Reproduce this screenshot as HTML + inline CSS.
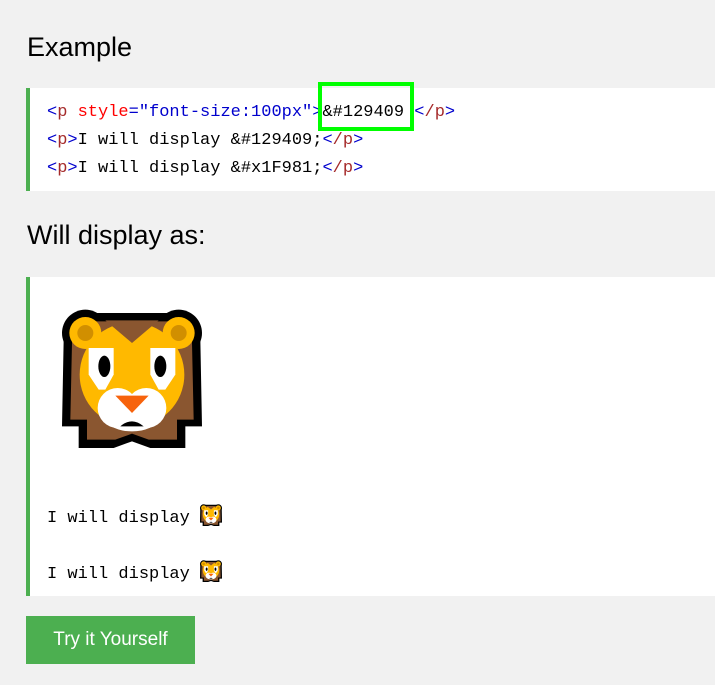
<!DOCTYPE html>
<html><head><meta charset="utf-8"><style>
body{margin:0;width:715px;height:685px;background:#f1f1f1;position:relative;overflow:hidden;font-family:"Liberation Sans",sans-serif}
h2{position:absolute;left:27px;margin:0;font-weight:normal;font-size:27px;color:#000}
.box{position:absolute;left:26px;right:0;background:#fff;border-left:4px solid #4CAF50}
.code{font-family:"Liberation Mono",monospace;font-size:17px;color:#000}
.ln{position:absolute;left:17px;white-space:pre;line-height:28px}
.t{color:#0000cd}.n{color:#a52a2a}.a{color:#f00}.v{color:#0000cd}
.hl{position:absolute;left:318px;top:82px;width:88px;height:41px;border:4px solid #0f0}
.btn{position:absolute;left:26px;top:616px;width:169px;height:48px;background:#4CAF50;color:#fff;font-size:19px;line-height:48px;text-align:center}
svg.s{vertical-align:-4px}
</style></head><body>
<svg width="0" height="0" style="position:absolute"><defs><symbol id="lion" viewBox="95 55 420 420">
<circle cx="165" cy="130" r="70" fill="#000"/><circle cx="445" cy="130" r="70" fill="#000"/>
<path d="M100 150 Q100 90 160 70 L450 70 Q510 90 510 150 L515 410 L465 410 L465 475 L360 475 L305 455 L250 475 L145 475 L145 410 L95 410 Z" fill="#000"/>
<path d="M125 160 Q125 100 175 95 L435 95 Q485 100 485 160 L490 390 L440 390 L440 450 L355 450 L305 432 L255 450 L170 450 L170 390 L120 390 Z" fill="#8a5630"/>
<circle cx="165" cy="130" r="48" fill="#ffb900"/><circle cx="445" cy="130" r="48" fill="#ffb900"/>
<circle cx="165" cy="130" r="24" fill="#d18f00"/><circle cx="445" cy="130" r="24" fill="#d18f00"/>
<circle cx="305" cy="255" r="157" fill="#ffb900"/>
<path d="M225 92 L305 160 L385 92 Z" fill="#8a5630"/>
<path d="M175 175 L250 175 L250 255 L225 300 L205 300 L175 255 Z" fill="#fff"/>
<path d="M435 175 L360 175 L360 255 L385 300 L405 300 L435 255 Z" fill="#fff"/>
<ellipse cx="222" cy="230" rx="18" ry="32" fill="#000"/><ellipse cx="390" cy="230" rx="18" ry="32" fill="#000"/>
<circle cx="262" cy="355" r="60" fill="#fff"/><circle cx="348" cy="355" r="60" fill="#fff"/><ellipse cx="305" cy="390" rx="75" ry="35" fill="#fff"/>
<path d="M255 318 L355 318 L305 370 Z" fill="#f7630c"/>
<path d="M270 410 Q305 380 340 410 Z" fill="#000"/>
</symbol></defs></svg>

<h2 style="top:32px">Example</h2>
<div class="box code" style="top:88px;height:103px">
<div class="ln" style="top:11px"><span class="t">&lt;</span><span class="n">p</span><span class="a"> style</span><span class="v">="font-size:100px"</span><span class="t">&gt;</span>&amp;#129409 <span class="t">&lt;</span><span class="n">/p</span><span class="t">&gt;</span></div>
<div class="ln" style="top:39px"><span class="t">&lt;</span><span class="n">p</span><span class="t">&gt;</span>I will display &amp;#129409;<span class="t">&lt;</span><span class="n">/p</span><span class="t">&gt;</span></div>
<div class="ln" style="top:67px"><span class="t">&lt;</span><span class="n">p</span><span class="t">&gt;</span>I will display &amp;#x1F981;<span class="t">&lt;</span><span class="n">/p</span><span class="t">&gt;</span></div>
</div>
<div class="hl"></div>
<h2 style="top:220px">Will display as:</h2>
<div class="box code" style="top:277px;height:319px">
<svg style="position:absolute;left:32px;top:31px" width="140" height="140"><use href="#lion"/></svg>
<div class="ln" style="top:227px">I will display <svg class="s" width="22" height="22"><use href="#lion"/></svg></div>
<div class="ln" style="top:283px">I will display <svg class="s" width="22" height="22"><use href="#lion"/></svg></div>
</div>
<div class="btn">Try it Yourself</div>
</body></html>
